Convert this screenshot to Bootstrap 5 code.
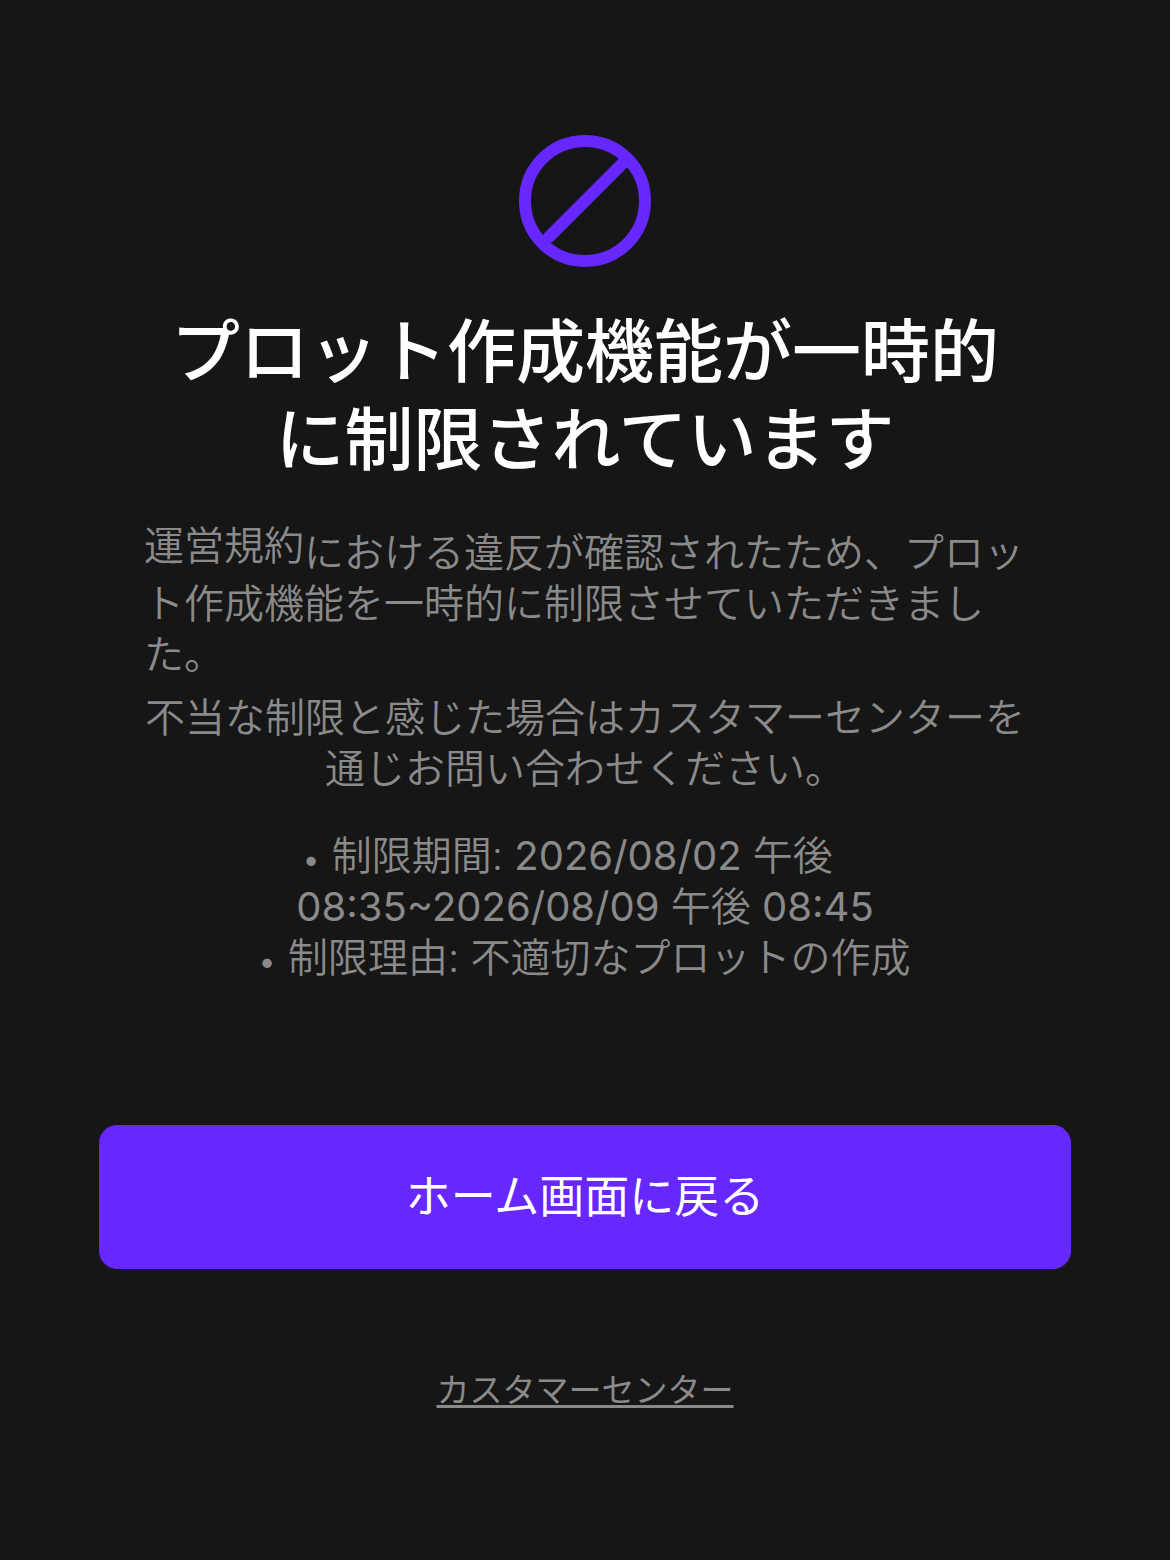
<!DOCTYPE html>
<html lang="ja">
<head>
<meta charset="utf-8">
<meta name="viewport" content="width=device-width, initial-scale=1">
<title>プロット作成機能の制限</title>
<link href="https://cdn.jsdelivr.net/npm/bootstrap@5.3.0/dist/css/bootstrap.min.css" rel="stylesheet">
<style>
  body { background: #161616; color: #8a8a8a; font-family: Inter, "Noto Sans CJK JP", sans-serif; }
  .notice { padding: 135px 99px 96px; }
  .notice-text { padding: 0 45px; font-size: 40px; line-height: 51px; font-weight: 350; }
  .notice-title { margin: 36px 0 47px; font-size: 69px; line-height: 88px; font-weight: 500; font-family: "Noto Sans CJK JP", sans-serif; }
  .notice-text p { margin-bottom: 12px; }
  .policy-link { color: inherit; line-height: 1; vertical-align: 7px; }
  .details { margin: 36px 0 0; }
  .details .bullet { font-size: 30px; line-height: 1; margin-right: 2px; font-weight: 600; }
  .btn-home { margin-top: 142px; height: 144px; border-radius: 18px; font-size: 45px; font-weight: 400;
    --bs-btn-color: #fff; --bs-btn-bg: #6628ff; --bs-btn-border-color: #6628ff;
    --bs-btn-hover-color: #fff; --bs-btn-hover-bg: #5720df; --bs-btn-hover-border-color: #5720df; }
  .center-link { margin-top: 96px; font-size: 33px; line-height: 50px; color: inherit; text-decoration-thickness: 3px; text-underline-offset: 3px; }
</style>
<script src="https://cdn.jsdelivr.net/npm/bootstrap@5.3.0/dist/js/bootstrap.bundle.min.js" defer></script>
</head>
<body>
<main class="notice d-flex flex-column align-items-center">
  <svg width="132" height="132" viewBox="0 0 132 132" fill="none" stroke="#6628ff" stroke-width="12" stroke-linecap="round" aria-hidden="true">
    <circle cx="66" cy="66" r="60"/>
    <path d="M30 102 106 26"/>
  </svg>
  <div class="notice-text w-100 text-center">
    <h1 class="notice-title text-white">プロット作成機能が一時的に制限されています</h1>
    <p class="text-start"><a class="policy-link text-decoration-none" href="#">運営規約</a>における違反が確認されたため、プロット作成機能を一時的に制限させていただきました。</p>
    <p>不当な制限と感じた場合はカスタマーセンターを通じお問い合わせください。</p>
    <ul class="details list-unstyled">
      <li><span class="bullet">•</span> 制限期間: <span class="fw-normal">2026/08/02</span> 午後&nbsp;&nbsp;&nbsp;<br><span class="fw-normal">08:35~2026/08/09</span> 午後 <span class="fw-normal">08:45</span></li>
      <li><span class="bullet">•</span> 制限理由: 不適切なプロットの作成</li>
    </ul>
  </div>
  <button type="button" class="btn btn-home w-100">ホーム画面に戻る</button>
  <a class="center-link" href="#">カスタマーセンター</a>
</main>
</body>
</html>
